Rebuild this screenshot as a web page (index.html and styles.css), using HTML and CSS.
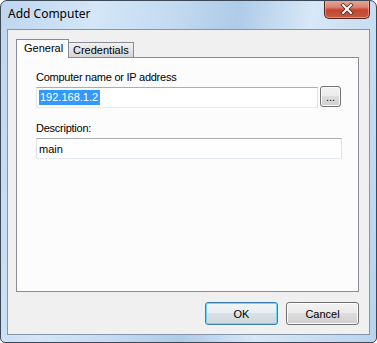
FILE: index.html
```html
<!DOCTYPE html>
<html lang="en">
<head>
    <meta charset="UTF-8">
    <title>Add Computer</title>
    <link rel="stylesheet" href="styles.css">
</head>
<body>
    <div class="window">
        <div class="titlebar">
            <span class="title">Add Computer</span>
            <div class="close">
                <svg width="16" height="12" viewBox="0 0 16 12">
                    <path d="M4 2 L12 10 M12 2 L4 10" stroke="#4a2a24" stroke-width="3.6" stroke-linecap="square"/>
                    <path d="M4 2 L12 10 M12 2 L4 10" stroke="#ffffff" stroke-width="2" stroke-linecap="square"/>
                </svg>
            </div>
        </div>
        <div class="client">
            <div class="tabs">
                <div class="tab active">General</div>
                <div class="tab">Credentials</div>
            </div>
            <div class="panel">
                <label class="label">Computer name or IP address</label>
                <div class="row">
                    <div class="textbox wide"><span class="sel">192.168.1.2</span><span class="caret"></span></div>
                    <button class="browse">...</button>
                </div>
                <label class="label">Description:</label>
                <div class="textbox">main</div>
            </div>
            <div class="footer">
                <button class="btn default">OK</button>
                <button class="btn">Cancel</button>
            </div>
        </div>
    </div>
</body>
</html>
```

FILE: styles.css
```css
*{
    box-sizing: border-box;
}
body{
    margin: 0;
    background-color: #ffffff;
    font-family: "Liberation Sans", Arial, sans-serif;
    font-size: 11px;
}
.window{
    width: 377px;
    height: 343px;
    border: 1px solid #3b4857;
    border-radius: 7px 7px 5px 5px;
    background: linear-gradient(100deg, #bdd6ef 0%, #d4e6f7 22%, #c3daf1 40%, #aecbe8 55%, #d7e8f7 72%, #c6dcf1 88%, #b9d3ed 100%);
    display: flex;
    flex-direction: column;
    overflow: hidden;
}
.titlebar{
    height: 28px;
    display: flex;
    justify-content: space-between;
    align-items: flex-start;
    padding-left: 7px;
    padding-right: 6px;
}
.title{
    font-family: "Noto Sans", sans-serif;
    font-size: 12px;
    color: #000000;
    line-height: 28px;
    margin-top: -1px;
}
.close{
    width: 46px;
    height: 19px;
    margin-top: -1px;
    border: 1px solid #54241c;
    border-top: none;
    border-radius: 0 0 5px 5px;
    background: linear-gradient(#e9aa9a 0%, #d98371 40%, #c4452f 55%, #c55a42 100%);
    box-shadow: inset 0 0 0 1px rgba(255,200,190,0.5);
    display: flex;
    justify-content: center;
    align-items: center;
}
.client{
    height: 306px;
    margin: 0 6px;
    border: 1px solid #8595a7;
    background-color: #f0f0f0;
    padding: 9px 10px 9px 8px;
    display: flex;
    flex-direction: column;
}
.tabs{
    display: flex;
    align-items: flex-end;
    height: 18px;
}
.tab{
    height: 15px;
    padding: 0 4px;
    border: 1px solid #898c95;
    border-bottom: none;
    background: linear-gradient(#f2f2f2, #e2e2e2 50%, #d6d6d6);
    line-height: 15px;
    color: #000000;
    margin-left: -1px;
}
.tab.active{
    height: 19px;
    margin-left: 0;
    margin-bottom: -1px;
    padding: 0 7px;
    width: 53px;
    background: #fcfcfc;
    position: relative;
    z-index: 1;
    line-height: 16px;
}
.panel{
    height: 237px;
    border: 1px solid #898c95;
    background-color: #fcfcfc;
    padding: 12px 17px 0 19px;
    display: flex;
    flex-direction: column;
}
.label{
    display: block;
    height: 17px;
    line-height: 14px;
    color: #000000;
    letter-spacing: -0.25px;
}
.row{
    display: flex;
    align-items: flex-start;
    margin-bottom: 13px;
}
.textbox{
    height: 21px;
    border: 1px solid #abadb3;
    border-right-color: #dbdfe6;
    border-bottom-color: #e3e9ef;
    border-left-color: #e2e3ea;
    background-color: #ffffff;
    padding: 0 2px;
    line-height: 18px;
    display: flex;
    align-items: center;
    width: 306px;
}
.textbox.wide{
    width: 282px;
}
.sel{
    background-color: #3399ff;
    color: #ffffff;
    line-height: 15px;
    padding: 0 1px;
}
.caret{
    width: 1px;
    height: 15px;
    background-color: #e07a20;
}
.browse{
    width: 21px;
    height: 21px;
    margin-left: 2px;
    margin-top: -1px;
    border: 1px solid #707070;
    border-radius: 3px;
    background: linear-gradient(#f2f2f2 0%, #ebebeb 45%, #dddddd 50%, #cfcfcf 100%);
    box-shadow: inset 0 0 0 1px #fcfcfc;
    font-family: "Liberation Sans", Arial, sans-serif;
    font-size: 11px;
    padding: 0;
    line-height: 18px;
}
.footer{
    display: flex;
    justify-content: flex-end;
    gap: 8px;
    margin-top: 10px;
}
.btn{
    width: 73px;
    height: 23px;
    border: 1px solid #707070;
    border-radius: 3px;
    background: linear-gradient(#f2f2f2 0%, #ebebeb 45%, #dddddd 50%, #cfcfcf 100%);
    box-shadow: inset 0 0 0 1px #fcfcfc;
    font-family: "Liberation Sans", Arial, sans-serif;
    font-size: 11px;
    color: #000000;
    padding: 0;
}
.btn.default{
    border-color: #3c7fb1;
    box-shadow: inset 0 0 0 1px #6fd6f7;
    background: linear-gradient(#f0f5f8 0%, #e8eef2 45%, #d9e1e6 50%, #cdd6dc 100%);
}
```
